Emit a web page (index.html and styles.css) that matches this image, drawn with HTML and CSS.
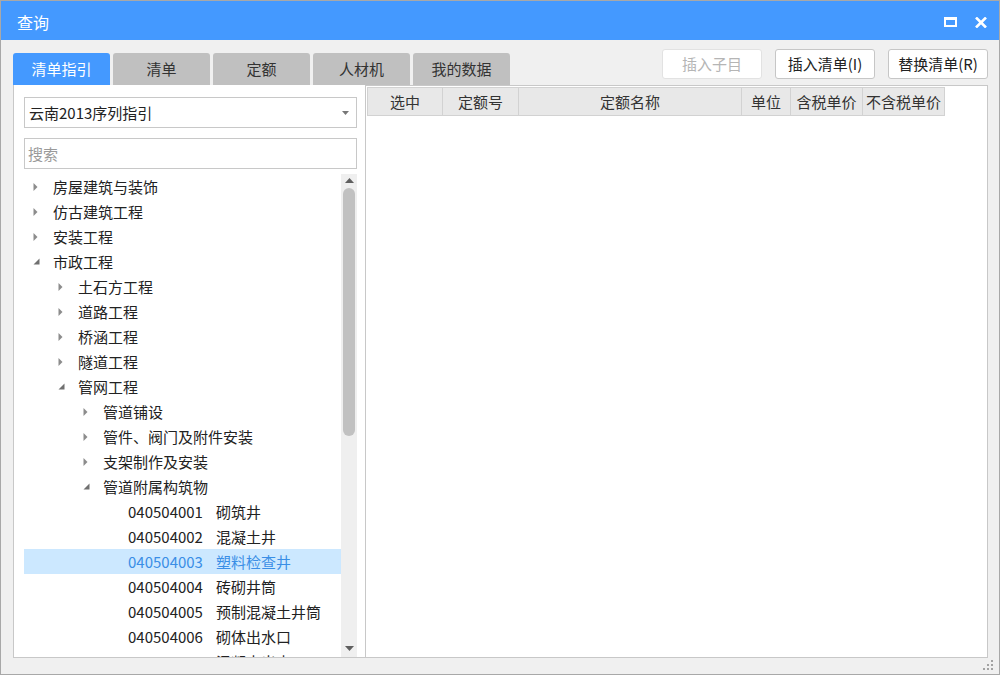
FILE: index.html
```html
<!DOCTYPE html>
<html lang="zh-CN">
<head>
<meta charset="utf-8">
<title>查询</title>
<link rel="stylesheet" href="styles.css">
</head>
<body>
<div class="window">
  <div class="titlebar">
    <span class="title">查询</span>
    <div class="ctrls">
      <svg class="ic-max" width="13" height="10" viewBox="0 0 13 10"><rect x="1" y="1.5" width="11" height="7.5" fill="none" stroke="#fff" stroke-width="2"/><rect x="0" y="0" width="13" height="3" fill="#fff"/></svg>
      <svg class="ic-close" width="12" height="11" viewBox="0 0 12 11"><path d="M1 0.5 L11 10.5 M11 0.5 L1 10.5" stroke="#fff" stroke-width="2.6"/></svg>
    </div>
  </div>
  <div class="body">
    <div class="toolbar">
      <div class="tabs">
        <div class="tab active">清单指引</div>
        <div class="tab">清单</div>
        <div class="tab">定额</div>
        <div class="tab">人材机</div>
        <div class="tab">我的数据</div>
      </div>
      <div class="buttons">
        <div class="btn disabled">插入子目</div>
        <div class="btn">插入清单(I)</div>
        <div class="btn">替换清单(R)</div>
      </div>
    </div>
    <div class="main">
      <div class="left">
        <div class="combo"><span>云南2013序列指引</span><svg width="7" height="4" viewBox="0 0 7 4"><path d="M0 0 H7 L3.5 4Z" fill="#777"/></svg></div>
        <div class="search">搜索</div>
        <div class="treewrap">
          <div class="tree">
            <div class="row l0"><span class="tg"><svg width="5" height="8" viewBox="0 0 5 8"><path d="M0.5 0 L4.5 4 L0.5 8Z" fill="#8c8c8c"/></svg></span>房屋建筑与装饰</div>
            <div class="row l0"><span class="tg"><svg width="5" height="8" viewBox="0 0 5 8"><path d="M0.5 0 L4.5 4 L0.5 8Z" fill="#8c8c8c"/></svg></span>仿古建筑工程</div>
            <div class="row l0"><span class="tg"><svg width="5" height="8" viewBox="0 0 5 8"><path d="M0.5 0 L4.5 4 L0.5 8Z" fill="#8c8c8c"/></svg></span>安装工程</div>
            <div class="row l0"><span class="tg"><svg width="7" height="7" viewBox="0 0 7 7"><path d="M6.5 0.5 V6.5 H0.5Z" fill="#707070"/></svg></span>市政工程</div>
            <div class="row l1"><span class="tg"><svg width="5" height="8" viewBox="0 0 5 8"><path d="M0.5 0 L4.5 4 L0.5 8Z" fill="#8c8c8c"/></svg></span>土石方工程</div>
            <div class="row l1"><span class="tg"><svg width="5" height="8" viewBox="0 0 5 8"><path d="M0.5 0 L4.5 4 L0.5 8Z" fill="#8c8c8c"/></svg></span>道路工程</div>
            <div class="row l1"><span class="tg"><svg width="5" height="8" viewBox="0 0 5 8"><path d="M0.5 0 L4.5 4 L0.5 8Z" fill="#8c8c8c"/></svg></span>桥涵工程</div>
            <div class="row l1"><span class="tg"><svg width="5" height="8" viewBox="0 0 5 8"><path d="M0.5 0 L4.5 4 L0.5 8Z" fill="#8c8c8c"/></svg></span>隧道工程</div>
            <div class="row l1"><span class="tg"><svg width="7" height="7" viewBox="0 0 7 7"><path d="M6.5 0.5 V6.5 H0.5Z" fill="#707070"/></svg></span>管网工程</div>
            <div class="row l2"><span class="tg"><svg width="5" height="8" viewBox="0 0 5 8"><path d="M0.5 0 L4.5 4 L0.5 8Z" fill="#8c8c8c"/></svg></span>管道铺设</div>
            <div class="row l2"><span class="tg"><svg width="5" height="8" viewBox="0 0 5 8"><path d="M0.5 0 L4.5 4 L0.5 8Z" fill="#8c8c8c"/></svg></span>管件、阀门及附件安装</div>
            <div class="row l2"><span class="tg"><svg width="5" height="8" viewBox="0 0 5 8"><path d="M0.5 0 L4.5 4 L0.5 8Z" fill="#8c8c8c"/></svg></span>支架制作及安装</div>
            <div class="row l2"><span class="tg"><svg width="7" height="7" viewBox="0 0 7 7"><path d="M6.5 0.5 V6.5 H0.5Z" fill="#707070"/></svg></span>管道附属构筑物</div>
            <div class="row l3"><span class="tg"></span><span class="code">040504001</span>砌筑井</div>
            <div class="row l3"><span class="tg"></span><span class="code">040504002</span>混凝土井</div>
            <div class="row l3 sel"><span class="tg"></span><span class="code">040504003</span>塑料检查井</div>
            <div class="row l3"><span class="tg"></span><span class="code">040504004</span>砖砌井筒</div>
            <div class="row l3"><span class="tg"></span><span class="code">040504005</span>预制混凝土井筒</div>
            <div class="row l3"><span class="tg"></span><span class="code">040504006</span>砌体出水口</div>
            <div class="row l3"><span class="tg"></span><span class="code">040504007</span>混凝土出水口</div>
          </div>
          <div class="scrollbar">
            <svg class="sb-up" width="9" height="5" viewBox="0 0 9 5"><path d="M0 5 L4.5 0 L9 5Z" fill="#5f5f5f"/></svg>
            <div class="thumb"></div>
            <svg class="sb-down" width="9" height="5" viewBox="0 0 9 5"><path d="M0 0 L9 0 L4.5 5Z" fill="#5f5f5f"/></svg>
          </div>
        </div>
      </div>
      <div class="right">
        <table class="grid">
          <thead>
            <tr>
              <th class="c1">选中</th>
              <th class="c2">定额号</th>
              <th class="c3">定额名称</th>
              <th class="c4">单位</th>
              <th class="c5">含税单价</th>
              <th class="c6">不含税单价</th>
            </tr>
          </thead>
        </table>
      </div>
    </div>
    <div class="statusbar">
      <svg width="12" height="12" viewBox="0 0 12 12"><g fill="#a3a3a3"><rect x="8" y="0" width="2" height="2"/><rect x="4" y="4" width="2" height="2"/><rect x="8" y="4" width="2" height="2"/><rect x="0" y="8" width="2" height="2"/><rect x="4" y="8" width="2" height="2"/><rect x="8" y="8" width="2" height="2"/></g></svg>
    </div>
  </div>
</div>
</body>
</html>
```
FILE: styles.css
```css
html, body {
  margin: 0;
  padding: 0;
  background: #ffffff;
}
.window {
  width: 1000px;
  height: 675px;
  box-sizing: border-box;
  border: 1px solid #a8a8a8;
  display: flex;
  flex-direction: column;
  background: #f0f0f0;
  font-family: "Noto Sans CJK SC", "Noto Sans", sans-serif;
  color: #222;
}
.titlebar {
  height: 39px;
  flex: none;
  background: #4499ff;
  display: flex;
  align-items: center;
  padding: 0 12px 0 16px;
  color: #fff;
  font-size: 16px;
}
.title {
  line-height: 20px;
  margin-top: 2px;
}
.ctrls {
  margin-left: auto;
  display: flex;
  align-items: center;
  gap: 18px;
  margin-top: 2px;
}
.ic-close {
  margin-top: 1px;
}
.body {
  flex: 1;
  display: flex;
  flex-direction: column;
}
.toolbar {
  height: 45px;
  flex: none;
  display: flex;
  justify-content: space-between;
  padding: 0 11px 0 12px;
}
.tabs {
  align-self: flex-end;
  display: flex;
  gap: 3px;
}
.tab {
  width: 97px;
  height: 32px;
  line-height: 32px;
  text-align: center;
  background: #c0c0c0;
  border-radius: 3px 3px 0 0;
  font-size: 15px;
  color: #333;
}
.tab.active {
  background: #4499ff;
  color: #fff;
}
.buttons {
  align-self: flex-start;
  margin-top: 9px;
  display: flex;
  gap: 13px;
}
.btn {
  width: 100px;
  height: 30px;
  box-sizing: border-box;
  border: 1px solid #c6c6c6;
  border-radius: 3px;
  background: #fff;
  text-align: center;
  line-height: 28px;
  font-size: 15px;
  color: #222;
}
.btn.disabled {
  border-color: #e2e2e2;
  color: #b5b5b5;
}
.main {
  height: 573px;
  flex: none;
  display: flex;
  padding: 0 11px 0 12px;
}
.left {
  width: 352px;
  box-sizing: border-box;
  background: #fff;
  border-left: 1px solid #c8c8c8;
  border-bottom: 1px solid #c8c8c8;
  padding: 12px 8px 0 10px;
  display: flex;
  flex-direction: column;
}
.combo {
  height: 31px;
  box-sizing: border-box;
  border: 1px solid #c8c8c8;
  display: flex;
  align-items: center;
  justify-content: space-between;
  padding: 0 7px 0 4px;
  font-size: 15px;
  color: #222;
}
.search {
  margin-top: 10px;
  height: 31px;
  box-sizing: border-box;
  border: 1px solid #c8c8c8;
  line-height: 29px;
  padding-left: 3px;
  font-size: 15px;
  color: #9a9a9a;
}
.treewrap {
  margin-top: 5px;
  flex: 1;
  display: flex;
  overflow: hidden;
}
.tree {
  width: 317px;
  overflow: hidden;
}
.row {
  height: 25px;
  display: flex;
  align-items: center;
  font-size: 15px;
  color: #222;
  white-space: nowrap;
}
.row.l1 { padding-left: 25px; }
.row.l2 { padding-left: 50px; }
.row.l3 { padding-left: 75px; }
.row.sel {
  background: #cce8ff;
  color: #3a8ee6;
}
.tg {
  width: 29px;
  flex: none;
  display: flex;
  align-items: center;
  padding-left: 9px;
  box-sizing: border-box;
}
.code {
  width: 88px;
  flex: none;
}
.scrollbar {
  width: 16px;
  flex: none;
  background: #efefef;
  display: flex;
  flex-direction: column;
  align-items: center;
}
.sb-up {
  margin-top: 4px;
  flex: none;
}
.thumb {
  width: 12px;
  height: 248px;
  margin-top: 5px;
  background: #c1c1c1;
  border-radius: 6px;
  flex: none;
}
.sb-down {
  margin-top: auto;
  margin-bottom: 6px;
  flex: none;
}
.right {
  width: 623px;
  box-sizing: border-box;
  background: #fff;
  border: 1px solid #c8c8c8;
  padding: 1px;
}
.grid {
  border-collapse: collapse;
  table-layout: fixed;
  width: 577px;
}
.grid th {
  height: 28px;
  box-sizing: border-box;
  padding: 0;
  background: #e8e8e8;
  border: 1px solid #d2d2d2;
  font-weight: normal;
  font-size: 15px;
  color: #333;
  text-align: center;
  white-space: nowrap;
}
.c1 { width: 75px; }
.c2 { width: 76px; }
.c3 { width: 223px; }
.c4 { width: 49px; }
.c5 { width: 72px; }
.c6 { width: 82px; }
.statusbar {
  flex: 1;
  display: flex;
  justify-content: flex-end;
  align-items: flex-end;
  padding: 0 4px 2px 0;
}
```
